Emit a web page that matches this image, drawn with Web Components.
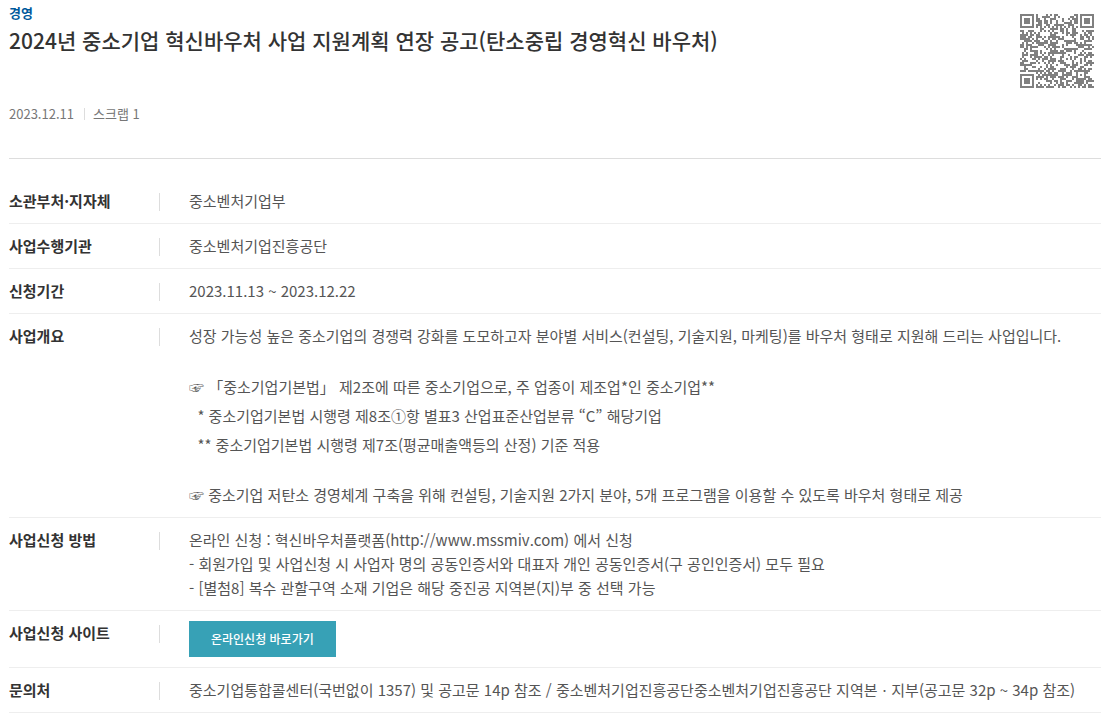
<!DOCTYPE html>
<html lang="ko">
<head>
<meta charset="utf-8">
<meta name="viewport" content="width=device-width, initial-scale=1">
<title>2024년 중소기업 혁신바우처 사업 지원계획 연장 공고</title>
<style>
  body {
    margin: 0;
    background: #fff;
    color: #555;
    font-family: "Noto Sans CJK KR", "Noto Sans", sans-serif;
    font-size: 15px;
    line-height: 24px;
  }
  main {
    padding-left: 9px;
  }
  p {
    margin: 0;
  }
  p + p {
    margin-top: 24px;
  }
  .notes {
    line-height: 29px;
  }
</style>
</head>
<body>
<main>
  <notice-header category="경영" date="2023.12.11" scraps="1">
    2024년 중소기업 혁신바우처 사업 지원계획 연장 공고(탄소중립 경영혁신 바우처)
    <qr-code slot="code" mask="4" value="https://www.bizinfo.go.kr/web/lay1/bbs/S1T122C128/AS/74/view.do?pblancId=PBLN_000000000093133"></qr-code>
  </notice-header>

  <info-list>
    <info-row label="소관부처·지자체">중소벤처기업부</info-row>
    <info-row label="사업수행기관">중소벤처기업진흥공단</info-row>
    <info-row label="신청기간">2023.11.13 ~ 2023.12.22</info-row>
    <info-row label="사업개요">
      <p>성장 가능성 높은 중소기업의 경쟁력 강화를 도모하고자 분야별 서비스(컨설팅, 기술지원, 마케팅)를 바우처 형태로 지원해 드리는 사업입니다.</p>
      <p class="notes">☞ 「중소기업기본법」 제2조에 따른 중소기업으로, 주 업종이 제조업*인 중소기업**<br>
        &nbsp; * 중소기업기본법 시행령 제8조①항 별표3 산업표준산업분류 “C” 해당기업<br>
        &nbsp; ** 중소기업기본법 시행령 제7조(평균매출액등의 산정) 기준 적용</p>
      <p>☞ 중소기업 저탄소 경영체계 구축을 위해 컨설팅, 기술지원 2가지 분야, 5개 프로그램을 이용할 수 있도록 바우처 형태로 제공</p>
    </info-row>
    <info-row label="사업신청 방법">
      온라인 신청 : 혁신바우처플랫폼(http://www.mssmiv.com) 에서 신청<br>
      - 회원가입 및 사업신청 시 사업자 명의 공동인증서와 대표자 개인 공동인증서(구 공인인증서) 모두 필요<br>
      - [별첨8] 복수 관할구역 소재 기업은 해당 중진공 지역본(지)부 중 선택 가능
    </info-row>
    <info-row label="사업신청 사이트">
      <link-button href="http://www.mssmiv.com">온라인신청 바로가기</link-button>
    </info-row>
    <info-row label="문의처">중소기업통합콜센터(국번없이 1357) 및 공고문 14p 참조 / 중소벤처기업진흥공단중소벤처기업진흥공단 지역본ㆍ지부(공고문 32p ~ 34p 참조)</info-row>
  </info-list>
</main>

<script>
const headerTemplate = document.createElement('template')
headerTemplate.innerHTML = `
  <style>
    :host {
      display: block;
      border-bottom: 1px solid #ddd;
    }
    header {
      display: flex;
      justify-content: space-between;
      gap: 24px;
      padding: 4px 7px 32px 0;
    }
    .category {
      margin: 0;
      color: #005a9c;
      font-size: 13px;
      font-weight: 700;
      line-height: 18px;
    }
    h1 {
      margin: 0;
      color: #333;
      font-size: 21px;
      font-weight: 500;
      line-height: 36px;
    }
    .meta {
      display: flex;
      align-items: center;
      gap: 10px;
      margin-top: 44px;
      color: #777;
      font-size: 13px;
      line-height: 24px;
    }
    .meta span {
      padding-left: 9px;
      background: linear-gradient(#ddd, #ddd) left center / 1px 12px no-repeat;
    }
    .code {
      padding-top: 10px;
    }
  </style>

  <header>
    <div>
      <p class="category"></p>
      <h1><slot></slot></h1>
      <div class="meta">
        <time></time>
        <span></span>
      </div>
    </div>
    <div class="code"><slot name="code"></slot></div>
  </header>
`
customElements.define('notice-header',
  /**
   * The category, title and date of a notice.
   */
  class extends HTMLElement {
    /**
     * Creates an instance of the current type.
     */
    constructor () {
      super()
      this.attachShadow({ mode: 'open' }).appendChild(headerTemplate.content.cloneNode(true))
    }

    /**
     * Called when the element is inserted into the DOM.
     */
    connectedCallback () {
      this.shadowRoot.querySelector('.category').textContent = this.getAttribute('category')
      this.shadowRoot.querySelector('time').textContent = this.getAttribute('date')
      this.shadowRoot.querySelector('.meta span').textContent = `스크랩 ${this.getAttribute('scraps')}`
    }
  })

const listTemplate = document.createElement('template')
listTemplate.innerHTML = `
  <style>
    :host {
      display: flex;
      flex-direction: column;
      padding-top: 20px;
    }
  </style>
  <slot></slot>
`
customElements.define('info-list',
  /**
   * A column of info rows.
   */
  class extends HTMLElement {
    /**
     * Creates an instance of the current type.
     */
    constructor () {
      super()
      this.attachShadow({ mode: 'open' }).appendChild(listTemplate.content.cloneNode(true))
    }
  })

const rowTemplate = document.createElement('template')
rowTemplate.innerHTML = `
  <style>
    :host {
      display: block;
      border-bottom: 1px solid #eee;
    }
    dl {
      display: grid;
      grid-template-columns: 151px 1fr;
      column-gap: 29px;
      margin: 0;
      padding: 10px 0;
    }
    dt {
      background: linear-gradient(#ddd, #ddd) right 4px / 1px 18px no-repeat;
      color: #333;
      font-weight: 700;
    }
    dd {
      margin: 0;
    }
  </style>

  <dl>
    <dt></dt>
    <dd><slot></slot></dd>
  </dl>
`
customElements.define('info-row',
  /**
   * A label with its value.
   */
  class extends HTMLElement {
    /**
     * Creates an instance of the current type.
     */
    constructor () {
      super()
      this.attachShadow({ mode: 'open' }).appendChild(rowTemplate.content.cloneNode(true))
    }

    /**
     * Called when the element is inserted into the DOM.
     */
    connectedCallback () {
      this.shadowRoot.querySelector('dt').textContent = this.getAttribute('label')
    }
  })

const buttonTemplate = document.createElement('template')
buttonTemplate.innerHTML = `
  <style>
    :host {
      display: flex;
    }
    a {
      padding: 0 22px;
      background: #37a1b6;
      color: #fff;
      font-size: 12px;
      font-weight: 500;
      line-height: 36px;
      text-decoration: none;
    }
    a:hover {
      background: #2c8fa3;
    }
  </style>
  <a><slot></slot></a>
`
customElements.define('link-button',
  /**
   * A link that looks like a button.
   */
  class extends HTMLElement {
    /**
     * Creates an instance of the current type.
     */
    constructor () {
      super()
      this.attachShadow({ mode: 'open' }).appendChild(buttonTemplate.content.cloneNode(true))
    }

    /**
     * Called when the element is inserted into the DOM.
     */
    connectedCallback () {
      this.shadowRoot.querySelector('a').href = this.getAttribute('href')
    }
  })

// Version 5, error correction level L.
const SIZE = 37
const DATA_WORDS = 108
const EC_WORDS = 26

const MASKS = [
  (r, c) => (r + c) % 2 === 0,
  (r, c) => r % 2 === 0,
  (r, c) => c % 3 === 0,
  (r, c) => (r + c) % 3 === 0,
  (r, c) => (Math.floor(r / 2) + Math.floor(c / 3)) % 2 === 0,
  (r, c) => (r * c) % 2 + (r * c) % 3 === 0,
  (r, c) => ((r * c) % 2 + (r * c) % 3) % 2 === 0,
  (r, c) => ((r + c) % 2 + (r * c) % 3) % 2 === 0
]

const qrTemplate = document.createElement('template')
qrTemplate.innerHTML = `
  <style>
    :host {
      display: block;
      width: 74px;
      height: 74px;
      color: #808080;
    }
    svg {
      display: block;
      width: 100%;
      height: 100%;
    }
  </style>
  <svg viewBox="0 0 37 37" aria-hidden="true" shape-rendering="crispEdges"><path fill="currentColor"/></svg>
`
customElements.define('qr-code',
  /**
   * A QR code of the text in the value attribute.
   */
  class extends HTMLElement {
    #modules
    #reserved

    /**
     * Creates an instance of the current type.
     */
    constructor () {
      super()
      this.attachShadow({ mode: 'open' }).appendChild(qrTemplate.content.cloneNode(true))
    }

    /**
     * Called when the element is inserted into the DOM.
     */
    connectedCallback () {
      const mask = Number(this.getAttribute('mask'))
      this.#modules = Array.from({ length: SIZE }, () => Array(SIZE).fill(false))
      this.#reserved = Array.from({ length: SIZE }, () => Array(SIZE).fill(false))

      this.#drawPatterns()
      this.#drawFormat(mask)
      this.#drawData(this.#encode(this.getAttribute('value')), mask)

      let d = ''
      this.#modules.forEach((row, r) => row.forEach((dark, c) => {
        if (dark) d += `M${c} ${r}h1v1h-1z`
      }))
      this.shadowRoot.querySelector('path').setAttribute('d', d)
    }

    #set (r, c, dark) {
      if (r < 0 || c < 0 || r >= SIZE || c >= SIZE) return
      this.#modules[r][c] = dark
      this.#reserved[r][c] = true
    }

    // Timing lines, three finders and the alignment square.
    #drawPatterns () {
      for (let i = 0; i < SIZE; i++) {
        this.#set(6, i, i % 2 === 0)
        this.#set(i, 6, i % 2 === 0)
      }
      for (const [row, col] of [[3, 3], [3, SIZE - 4], [SIZE - 4, 3]]) {
        for (let y = -4; y <= 4; y++) {
          for (let x = -4; x <= 4; x++) {
            const ring = Math.max(Math.abs(x), Math.abs(y))
            this.#set(row + y, col + x, ring !== 2 && ring !== 4)
          }
        }
      }
      for (let y = -2; y <= 2; y++) {
        for (let x = -2; x <= 2; x++) {
          this.#set(30 + y, 30 + x, Math.max(Math.abs(x), Math.abs(y)) !== 1)
        }
      }
    }

    #drawFormat (mask) {
      const data = 1 << 3 | mask
      let rest = data
      for (let i = 0; i < 10; i++) rest = (rest << 1) ^ ((rest >> 9) * 0x537)
      const bits = (data << 10 | rest) ^ 0x5412
      const bit = i => (bits >> i & 1) === 1

      for (let i = 0; i < 6; i++) this.#set(i, 8, bit(i))
      this.#set(7, 8, bit(6))
      this.#set(8, 8, bit(7))
      this.#set(8, 7, bit(8))
      for (let i = 9; i < 15; i++) this.#set(8, 14 - i, bit(i))

      for (let i = 0; i < 8; i++) this.#set(8, SIZE - 1 - i, bit(i))
      for (let i = 8; i < 15; i++) this.#set(SIZE - 15 + i, 8, bit(i))
      this.#set(SIZE - 8, 8, true)
    }

    #encode (text) {
      const bytes = [...new TextEncoder().encode(text)]
      let bits = '0100' + bytes.length.toString(2).padStart(8, '0')
      for (const byte of bytes) bits += byte.toString(2).padStart(8, '0')
      bits += '0000'

      const words = bits.match(/.{8}/g).map(word => parseInt(word, 2))
      for (let pad = 0xec; words.length < DATA_WORDS; pad ^= 0xec ^ 0x11) words.push(pad)
      return words.concat(this.#errorWords(words))
    }

    #multiply (a, b) {
      let z = 0
      for (let i = 7; i >= 0; i--) {
        z = (z << 1) ^ ((z >> 7) * 0x11d)
        z ^= (b >> i & 1) * a
      }
      return z
    }

    #errorWords (words) {
      const divisor = Array(EC_WORDS).fill(0)
      divisor[EC_WORDS - 1] = 1
      let root = 1
      for (let i = 0; i < EC_WORDS; i++) {
        for (let j = 0; j < EC_WORDS; j++) {
          divisor[j] = this.#multiply(divisor[j], root) ^ (divisor[j + 1] || 0)
        }
        root = this.#multiply(root, 2)
      }

      const result = Array(EC_WORDS).fill(0)
      for (const word of words) {
        const factor = word ^ result.shift()
        result.push(0)
        divisor.forEach((value, i) => { result[i] ^= this.#multiply(value, factor) })
      }
      return result
    }

    // Fills pairs of columns from the right, up and down in turn.
    #drawData (words, mask) {
      let i = 0
      for (let right = SIZE - 1; right >= 1; right -= 2) {
        if (right === 6) right = 5
        const upward = (right + 1 & 2) === 0
        for (let step = 0; step < SIZE; step++) {
          for (const c of [right, right - 1]) {
            const r = upward ? SIZE - 1 - step : step
            if (this.#reserved[r][c]) continue
            const dark = i < words.length * 8 && (words[i >> 3] >> (7 - (i & 7)) & 1) === 1
            this.#modules[r][c] = dark !== MASKS[mask](r, c)
            i++
          }
        }
      }
    }
  })
</script>
</body>
</html>
